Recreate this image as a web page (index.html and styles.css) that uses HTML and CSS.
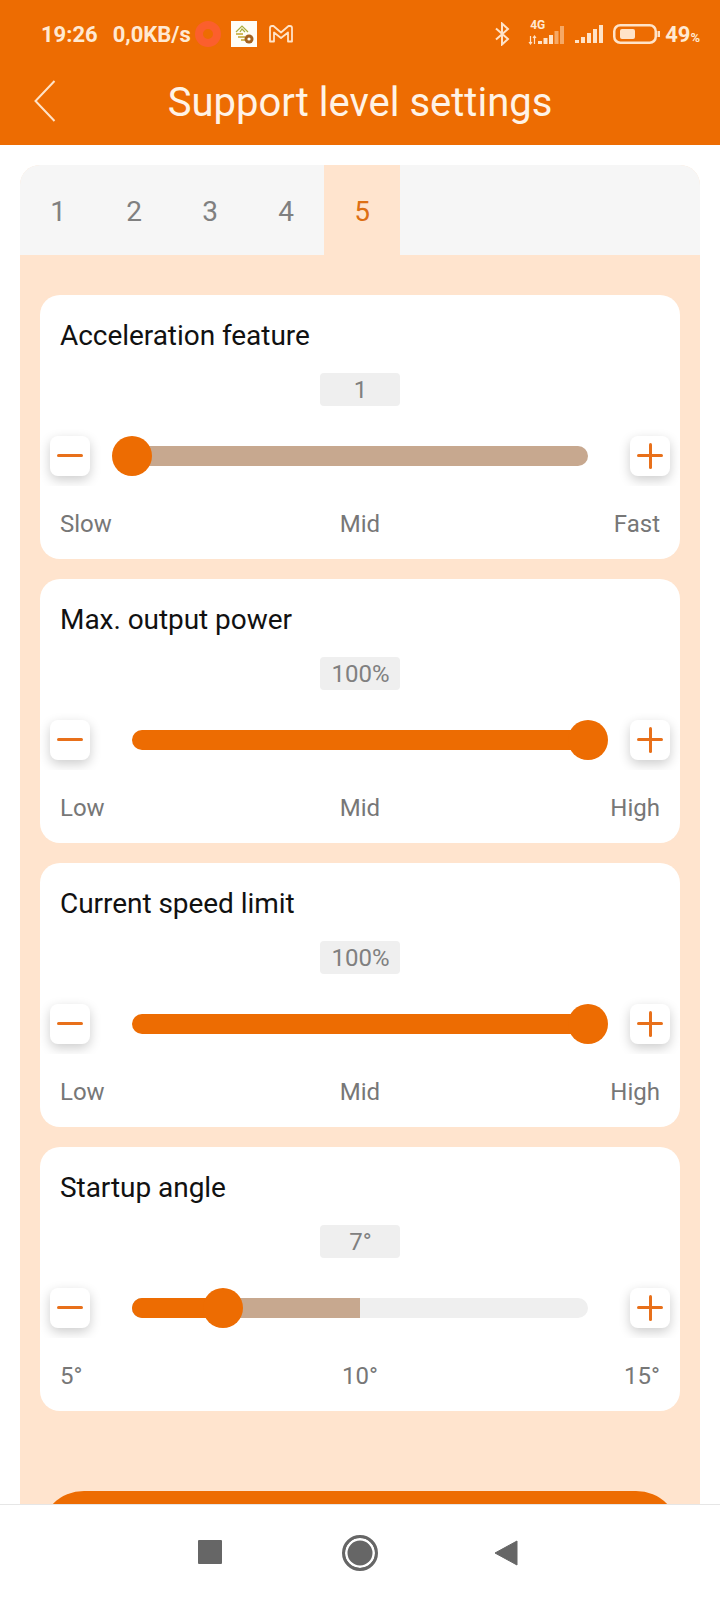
FILE: index.html
```html
<!DOCTYPE html>
<html lang="en">
<head>
<meta charset="utf-8">
<title>Support level settings</title>
<link rel="stylesheet" href="styles.css">
</head>
<body>
<div class="screen">
  <header class="head">
    <div class="status">
      <div class="status-left">
        <span class="time">19:26</span>
        <span class="speed">0,0KB/s</span>
        <span class="ring"></span>
        <svg class="note" viewBox="0 0 26 26" width="26" height="26"><rect width="26" height="26" fill="#fffdf6"/><path d="M5 11 L11 5 L17 11 M9 11 L11 8 L14 11" fill="none" stroke="#a9ad3c" stroke-width="1.2"/><path d="M5 13 H12 M7 16 H14 M10 19 H14" stroke="#c2a52f" stroke-width="1.3"/><circle cx="18" cy="18" r="4.500" fill="#a4621f"/><circle cx="18" cy="18" r="1.600" fill="#fffdf6"/></svg>
        <svg class="gmail" viewBox="0 0 26 20" width="26" height="20"><path d="M2 17.500 V4 Q2 2 4 2 H5.500 L13 8.500 L20.500 2 H22 Q24 2 24 4 V17.500 H20 V8.500 L13 14 L6 8.500 V17.500 Z" fill="none" stroke="#ffe3c8" stroke-width="1.800" stroke-linejoin="round"/></svg>
      </div>
      <div class="status-right">
        <svg class="bt" viewBox="0 0 16 24" width="16" height="24"><path d="M2 6.500 L14 17 L8 22.500 V1.500 L14 7 L2 17.500" fill="none" stroke="#ffe3c8" stroke-width="2"/></svg>
        <div class="net">
          <span class="net-label">4G</span>
          <svg viewBox="0 0 40 24" width="40" height="24"><path d="M2.500 14 V22 M1 20 L2.500 22 L4 20 M6.500 22 V14 M5 16 L6.500 14 L8 16" fill="none" stroke="#ffe3c8" stroke-width="1.200"/><path d="M10 19 h4 v3 h-4z M15.500 16 h4 v6 h-4z M21 13 h4 v9 h-4z" fill="#ffe3c8"/><path d="M26.500 9 h4 v13 h-4z M32 4 h4 v18 h-4z" fill="#ffe3c8" opacity=".5"/></svg>
        </div>
        <svg class="sig" viewBox="0 0 28 20" width="28" height="20"><path d="M0 16 h4 v3 h-4z M6 13 h4 v6 h-4z M12 9 h4 v10 h-4z M18 5 h4 v14 h-4z M24 1 h4 v18 h-4z" fill="#ffe3c8"/></svg>
        <svg class="bat" viewBox="0 0 47 20" width="47" height="20"><rect x="1.250" y="1.250" width="41.500" height="17.500" rx="6" fill="none" stroke="#ffe3c8" stroke-width="2.500"/><rect x="7" y="5" width="15" height="10" rx="2" fill="#ffe3c8"/><rect x="44.500" y="7" width="2.500" height="6" fill="#ffe3c8"/></svg>
        <span class="pct">49<small>%</small></span>
      </div>
    </div>
    <div class="bar">
      <svg class="back" viewBox="0 0 22 42" width="22" height="42"><path d="M20.500 1 L1.500 21 L20.500 41" fill="none" stroke="#ffe3c8" stroke-width="2"/></svg>
      <h1 class="title">Support level settings</h1>
    </div>
  </header>

  <main class="main">
    <section class="panel">
      <div class="tabs">
        <span class="tab">1</span>
        <span class="tab">2</span>
        <span class="tab">3</span>
        <span class="tab">4</span>
        <span class="tab tab-on">5</span>
      </div>
      <div class="panel-body">
        <article class="card">
          <h2 class="card-title">Acceleration feature</h2>
          <div class="value">1</div>
          <div class="row">
            <button class="step"><span class="dash"></span></button>
            <div class="slider">
              <div class="track tan"></div>
              <span class="thumb thumb-min"></span>
            </div>
            <button class="step"><span class="dash"></span><span class="dash dash-v"></span></button>
          </div>
          <div class="labels"><span>Slow</span><span>Mid</span><span class="end">Fast</span></div>
        </article>
        <article class="card">
          <h2 class="card-title">Max. output power</h2>
          <div class="value">100%</div>
          <div class="row">
            <button class="step"><span class="dash"></span></button>
            <div class="slider">
              <div class="track orange"></div>
              <span class="thumb thumb-max"></span>
            </div>
            <button class="step"><span class="dash"></span><span class="dash dash-v"></span></button>
          </div>
          <div class="labels"><span>Low</span><span>Mid</span><span class="end">High</span></div>
        </article>
        <article class="card">
          <h2 class="card-title">Current speed limit</h2>
          <div class="value">100%</div>
          <div class="row">
            <button class="step"><span class="dash"></span></button>
            <div class="slider">
              <div class="track orange"></div>
              <span class="thumb thumb-max"></span>
            </div>
            <button class="step"><span class="dash"></span><span class="dash dash-v"></span></button>
          </div>
          <div class="labels"><span>Low</span><span>Mid</span><span class="end">High</span></div>
        </article>
        <article class="card">
          <h2 class="card-title">Startup angle</h2>
          <div class="value">7°</div>
          <div class="row">
            <button class="step"><span class="dash"></span></button>
            <div class="slider">
              <div class="track grey">
                <span class="seg seg-tan"></span>
                <span class="seg seg-orange"></span>
              </div>
              <span class="thumb thumb-angle"></span>
            </div>
            <button class="step"><span class="dash"></span><span class="dash dash-v"></span></button>
          </div>
          <div class="labels"><span>5°</span><span>10°</span><span class="end">15°</span></div>
        </article>
        <div class="save"></div>
      </div>
    </section>
  </main>

  <nav class="nav">
    <span class="nav-square"></span>
    <span class="nav-circle"></span>
    <svg class="nav-back" viewBox="0 0 24 26" width="24" height="26"><path d="M23 1 V25 L1 13 Z" fill="#666" stroke="#666" stroke-width="1" stroke-linejoin="round"/></svg>
  </nav>
</div>
</body>
</html>
```

FILE: styles.css
```css
* { box-sizing: border-box; }
html, body { margin: 0; padding: 0; }
body { font-family: Roboto, "Noto Sans", sans-serif; background: #fff; }
.screen { width: 720px; height: 1600px; display: flex; flex-direction: column; overflow: hidden; position: relative; }

.head { height: 145px; background: #ed6c02; color: #fff3e6; flex: none; }
.status { height: 72px; padding: 21px 0 0 41px; display: flex; justify-content: space-between; align-items: flex-start; color: #ffe9d2; }
.status-left { display: flex; align-items: center; height: 26px; }
.time { font-size: 22px; font-weight: 700; }
.speed { font-size: 22px; font-weight: 700; margin-left: 15px; }
.ring { width: 26px; height: 26px; border-radius: 50%; border: 8px solid #fb5f2d; margin-left: 4px; }
.note { margin-left: 10px; }
.gmail { margin-left: 11px; }
.status-right { display: flex; align-items: center; height: 26px; padding-right: 20px; }
.bt { margin-right: 18px; }
.net { position: relative; width: 38px; height: 24px; margin-right: 9px; }
.net-label { position: absolute; left: 2px; top: -3px; font-size: 12px; font-weight: 700; line-height: 12px; }
.sig { margin-right: 10px; }
.bat { margin-right: 5px; }
.pct { font-size: 22px; font-weight: 700; }
.pct small { font-size: 13px; }

.bar { height: 73px; position: relative; display: flex; align-items: center; justify-content: center; padding-bottom: 12px; }
.back { position: absolute; left: 34px; top: 8px; }
.title { margin: 0; font-size: 40px; font-weight: 400; line-height: 46px; }

.main { flex: 1; min-height: 0; padding: 20px 20px 0; overflow: hidden; }
.panel { background: #ffe4ce; border-radius: 20px 20px 0 0; overflow: hidden; }
.tabs { height: 90px; background: #f6f6f6; display: flex; }
.tab { width: 76px; display: flex; align-items: center; justify-content: center; padding-top: 2px; font-size: 28px; color: #808080; }
.tab-on { background: #ffe4ce; color: #dd6f14; }
.panel-body { padding: 40px 20px 0; display: flex; flex-direction: column; gap: 20px; height: 1300px; }
.card { height: 264px; background: #fff; border-radius: 20px; padding: 21px 0 0; flex: none; }
.card-title { margin: 0 20px; font-size: 28px; font-weight: 400; line-height: 40px; color: #111; letter-spacing: -.05px; }
.value { width: 80px; height: 33px; margin: 17px auto 0; padding-left: 1px; background: #efefef; border-radius: 4px; color: #808080; font-size: 24px; line-height: 35px; text-align: center; }
.row { height: 60px; margin-top: 20px; display: flex; align-items: center; padding: 0 10px; overflow: hidden; justify-content: space-between; }
.step { position: relative; width: 40px; height: 40px; padding: 0; border: 0; background: #fff; border-radius: 8px; box-shadow: 0 4px 12px rgba(0, 0, 0, .2); flex: none; }
.dash { position: absolute; left: 7px; top: 18px; width: 26px; height: 3px; border-radius: 2px; background: #e8701a; }
.dash-v { left: 18.500px; top: 7px; width: 3px; height: 26px; }
.slider { position: relative; width: 456px; height: 20px; }
.track { height: 20px; border-radius: 10px; overflow: hidden; position: relative; }
.tan { background: #c7a88f; }
.orange { background: #ed6c02; }
.grey { background: #efefef; }
.seg { position: absolute; left: 0; top: 0; height: 100%; }
.seg-tan { width: 50%; background: #c7a88f; }
.seg-orange { width: 20%; background: #ed6c02; }
.thumb { position: absolute; top: -10px; width: 40px; height: 40px; margin-left: -20px; border-radius: 50%; background: #ed6c02; }
.thumb-min { left: 0; }
.thumb-max { left: 100%; }
.thumb-angle { left: 20%; }
.labels { display: grid; grid-template-columns: 1fr auto 1fr; margin: 22px 20px 0; font-size: 24px; line-height: 32px; color: #777; }
.end { text-align: right; }
.save { height: 88px; margin-top: 60px; background: #ed6c02; border-radius: 44px; flex: none; }

.nav { position: absolute; left: 0; right: 0; bottom: 0; height: 96px; background: #fff; border-top: 1px solid #e6e6e6; }
.nav-square { position: absolute; left: 198px; top: 35px; width: 24px; height: 24px; border-radius: 1px; background: #666; }
.nav-circle { position: absolute; left: 342px; top: 30px; width: 36px; height: 36px; border-radius: 50%; border: 3px solid #666; background: #666; box-shadow: inset 0 0 0 2.500px #fff; }
.nav-back { position: absolute; left: 494px; top: 35px; }
```
